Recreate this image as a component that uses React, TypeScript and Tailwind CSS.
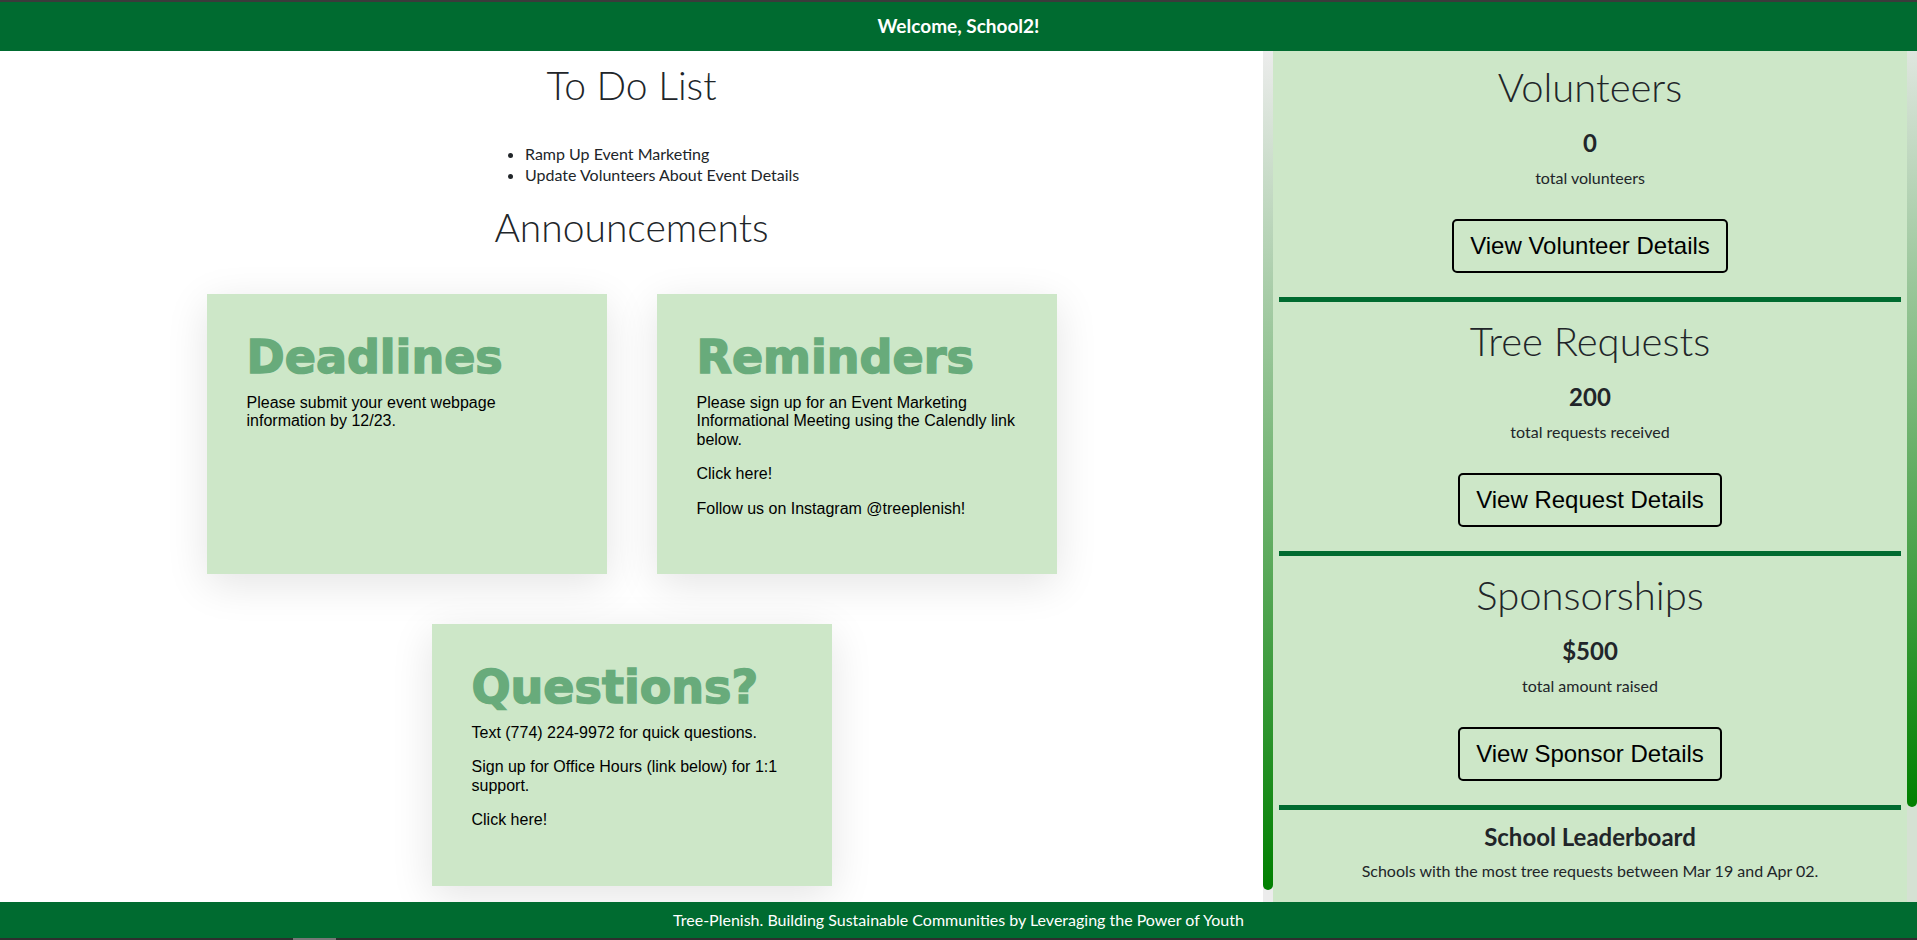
import type { ReactNode } from 'react';

const stats = [
    { title: 'Volunteers', value: '0', label: 'total volunteers', button: 'View Volunteer Details' },
    { title: 'Tree Requests', value: '200', label: 'total requests received', button: 'View Request Details' },
    { title: 'Sponsorships', value: '$500', label: 'total amount raised', button: 'View Sponsor Details' },
];

function NoteCard({ title, children }: { title: string; children: ReactNode }) {
    return (
        <div className="w-[400px] bg-[#cde7c8] p-10 font-['Liberation_Sans',Arial,sans-serif] text-[16px] leading-[1.15] text-black shadow-[0_10px_40px_rgba(0,0,0,0.11)]">
            <h2 className="mb-[14px] font-['DejaVu_Sans',sans-serif] text-[46px] font-bold leading-none text-[#68ab7b] [-webkit-text-stroke:1.5px_#68ab7b]">
                {title}
            </h2>
            {children}
        </div>
    );
}

export default function App() {
    return (
        <div className="flex h-[940px] w-full flex-col overflow-hidden font-['Lato',sans-serif] text-[#212529]">
            <div className="h-[2px] bg-[#3b3b3b]" />
            <header className="flex h-[49px] items-center justify-center bg-[#006b30] text-[19px] font-bold text-white">
                Welcome, School2!
            </header>

            <div className="flex flex-1 overflow-hidden">
                {/* left column */}
                <main className="w-[1263px] overflow-hidden bg-white">
                    <h1 className="pt-[10px] text-center text-[39px] font-light leading-[48px]">To Do List</h1>
                    <ul className="mt-[34px] ml-[525px] list-disc text-[16px] leading-[21px]">
                        <li>Ramp Up Event Marketing</li>
                        <li>Update Volunteers About Event Details</li>
                    </ul>
                    <h1 className="mt-[18px] text-center text-[39px] font-light leading-[48px]">Announcements</h1>

                    <div className="mt-[43px] flex flex-wrap justify-center gap-[50px] pb-10">
                        <NoteCard title="Deadlines">
                            <p className="mb-4">Please submit your event webpage information by 12/23.</p>
                        </NoteCard>
                        <NoteCard title="Reminders">
                            <p className="mb-4">
                                Please sign up for an Event Marketing Informational Meeting using the Calendly link below.
                            </p>
                            <p className="mb-4">Click here!</p>
                            <p className="mb-4">Follow us on Instagram @treeplenish!</p>
                        </NoteCard>
                        <NoteCard title="Questions?">
                            <p className="mb-4">Text (774) 224-9972 for quick questions.</p>
                            <p className="mb-4">Sign up for Office Hours (link below) for 1:1 support.</p>
                            <p className="mb-4">Click here!</p>
                        </NoteCard>
                    </div>
                </main>

                <div className="flex w-[10px] flex-col bg-[#ececec]">
                    <div className="h-[839px] rounded-b-[5px] bg-[linear-gradient(to_bottom,#ececec,#008000)]" />
                </div>

                {/* stats panel */}
                <aside className="w-[634px] overflow-hidden bg-[#cde7c8] pt-[12px] text-center">
                    {stats.map((s) => (
                        <section key={s.title}>
                            <h2 className="text-[40px] font-light leading-[48px]">{s.title}</h2>
                            <p className="mt-[20px] text-[24px] font-bold leading-[24px]">{s.value}</p>
                            <p className="mt-[12px] text-[16px] leading-[21px]">{s.label}</p>
                            <div className="mt-[31px] flex justify-center">
                                <button className="rounded-[5px] border-2 border-black px-4 py-[11px] font-['Liberation_Sans',Arial,sans-serif] text-[24px] leading-[28px] text-black">
                                    {s.button}
                                </button>
                            </div>
                            <div className="mx-[6px] mt-[24px] mb-[15px] h-[5px] bg-[#006b30]" />
                        </section>
                    ))}
                    <h3 className="text-[24px] font-bold leading-[24px]">School Leaderboard</h3>
                    <p className="mt-[11px] text-[16px] leading-[21px]">
                        Schools with the most tree requests between Mar 19 and Apr 02.
                    </p>
                </aside>

                <div className="flex w-[10px] flex-col bg-[#d5e1d3]">
                    <div className="h-[756px] rounded-b-[5px] bg-[linear-gradient(to_bottom,#dfe6df,#008000)]" />
                </div>
            </div>

            <footer className="flex h-[36px] items-center justify-center bg-[#006b30] text-[16px] text-white">
                Tree-Plenish. Building Sustainable Communities by Leveraging the Power of Youth
            </footer>
            <div className="h-[2px] bg-[#2e2e2e]">
                <div className="ml-[293px] h-full w-[43px] bg-[#777777]" />
            </div>
        </div>
    );
}
